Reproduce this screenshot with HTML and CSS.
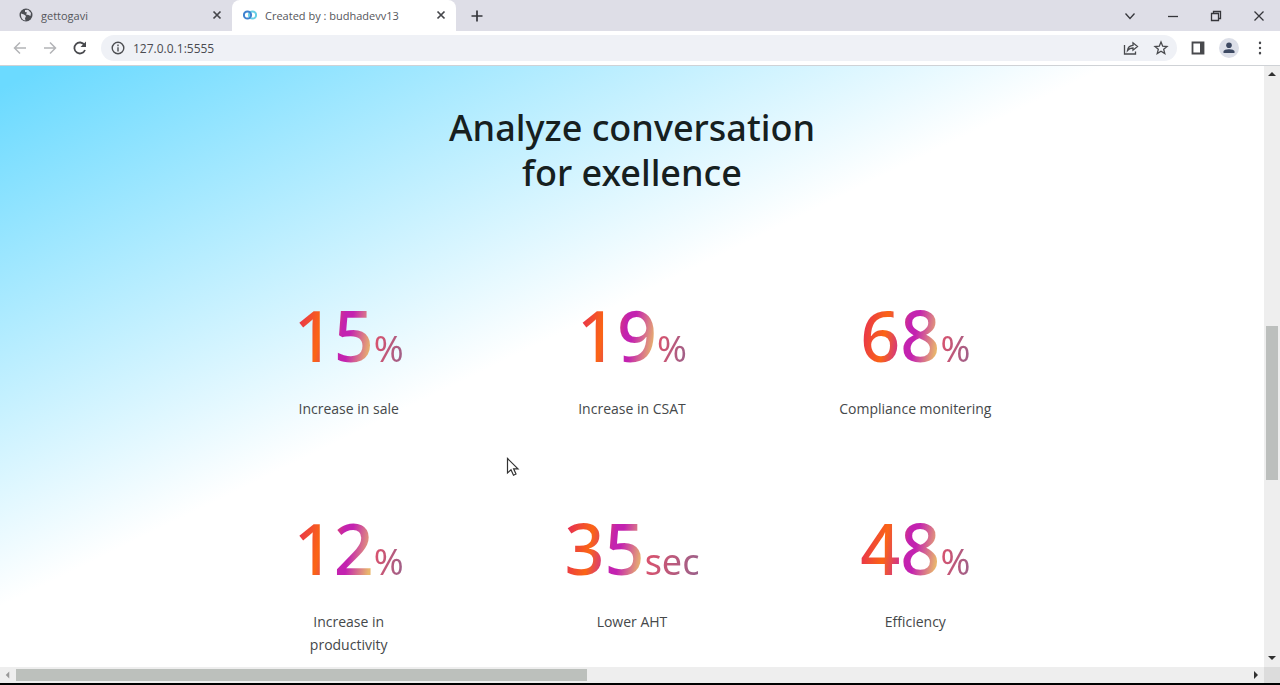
FILE: index.html
```html
<!DOCTYPE html>
<html lang="en">
<head>
<meta charset="utf-8">
<title>Created by : budhadevv13</title>
<link rel="stylesheet" href="styles.css">
</head>
<body>
<header class="browser">
  <div class="tabs">
    <div class="tab">
      <svg class="tab-icon" viewBox="0 0 14 14"><circle cx="7" cy="7" r="6.5" fill="#4b4d53"/><path d="M2 5.5 5 6.5 7 8 6 10.5 6.5 12.5C3.500 12.300 1.600 9.500 2 5.500ZM6 2 9 1.800 12 5 11.500 8 9.500 7 7 6.500 8 4.500 6 4Z" fill="#dedee7"/></svg>
      <span class="tab-title">gettogavi</span>
      <button class="tab-close" aria-label="Close tab"><svg viewBox="0 0 10 10"><path d="M1.500 1.500 8.500 8.500M8.500 1.500 1.500 8.500"/></svg></button>
    </div>
    <div class="tab active">
      <svg class="tab-icon" viewBox="0 0 14 14" fill="none" stroke-width="2"><circle cx="9.500" cy="7" r="3.600" stroke="#67cfe6"/><circle cx="4.500" cy="7" r="3.600" stroke="#3e82cf"/></svg>
      <span class="tab-title">Created by : budhadevv13</span>
      <button class="tab-close" aria-label="Close tab"><svg viewBox="0 0 10 10"><path d="M1.500 1.500 8.500 8.500M8.500 1.500 1.500 8.500"/></svg></button>
    </div>
    <button class="new-tab" aria-label="New tab"><svg viewBox="0 0 12 12"><path d="M6 .5V11.500M.5 6H11.500"/></svg></button>
    <div class="window-controls">
      <button aria-label="Search tabs"><svg viewBox="0 0 12 12"><path d="M1.500 3.500 6 8.500 10.500 3.500"/></svg></button>
      <button aria-label="Minimize"><svg viewBox="0 0 12 12"><path d="M1 6.500H11"/></svg></button>
      <button aria-label="Restore"><svg viewBox="0 0 12 12"><path d="M1.500 3.500H8.500V10.500H1.500ZM3.500 3.500V1.500H10.500V8.500H8.500"/></svg></button>
      <button aria-label="Close"><svg viewBox="0 0 12 12"><path d="M1.500 1.500 10.500 10.500M10.500 1.500 1.500 10.500"/></svg></button>
    </div>
  </div>
  <div class="toolbar">
    <button class="nav muted" aria-label="Back"><svg viewBox="0 0 16 16"><path d="M14 8H2.500M8 2.500 2.500 8 8 13.500"/></svg></button>
    <button class="nav muted" aria-label="Forward"><svg viewBox="0 0 16 16"><path d="M2 8H13.500M8 2.500 13.500 8 8 13.500"/></svg></button>
    <button class="nav" aria-label="Reload"><svg viewBox="0 0 16 16"><path d="M13 10A5.500 5.500 0 1 1 12.500 5"/><path d="M14 1.500V7H8.500Z" fill="#48494d" stroke="none"/></svg></button>
    <div class="address">
      <svg class="info" viewBox="0 0 14 14"><circle cx="7" cy="7" r="5.800"/><path d="M7 6.300V10.500M7 3.600V5.200"/></svg>
      <input class="url" type="text" aria-label="Address" value="127.0.0.1:5555">
      <button class="nav" aria-label="Share"><svg viewBox="0 0 16 16" class="thin"><path d="M1.500 5V14H12.500V11.500"/><path d="M4.500 10.500C5 7 7 5.500 10 5.300V2.800L14.500 6.500 10 10.200V8C7.500 8 6 8.600 4.500 10.500Z"/></svg></button>
      <button class="nav" aria-label="Bookmark"><svg viewBox="0 0 16 16" class="thin"><path d="M8 2 9.700 6.200 14 6.500 10.700 9.300 11.800 13.600 8 11.300 4.200 13.600 5.300 9.300 2 6.500 6.300 6.200Z"/></svg></button>
    </div>
    <button class="nav" aria-label="Side panel"><svg viewBox="0 0 16 16"><path d="M2.500 2.500H13.500V13.500H2.500Z"/><path d="M10 2H14V14H10Z" fill="#48494d" stroke="none"/></svg></button>
    <button class="profile" aria-label="Profile"><svg viewBox="0 0 20 20"><circle cx="10" cy="10" r="10" fill="#dcdfe8"/><circle cx="10" cy="7.300" r="2.800" fill="#3d4962"/><path d="M4.500 15V13.500C4.500 10.500 15.500 10.500 15.500 13.500V15Z" fill="#3d4962"/></svg></button>
    <button class="nav" aria-label="Menu"><svg viewBox="0 0 16 16"><path d="M8 2.800v.2M8 7.900v.2M8 13v.2" stroke-width="2.400" stroke-linecap="round"/></svg></button>
  </div>
</header>
<div class="viewport">
  <main class="page">
    <h1 class="heading">Analyze conversation<br>for exellence</h1>
    <section class="stats">
      <div class="stat"><p class="figure"><span class="number">15</span><span class="unit">%</span></p><p class="label">Increase in sale</p></div>
      <div class="stat"><p class="figure"><span class="number">19</span><span class="unit">%</span></p><p class="label">Increase in CSAT</p></div>
      <div class="stat"><p class="figure"><span class="number">68</span><span class="unit">%</span></p><p class="label">Compliance monitering</p></div>
      <div class="stat"><p class="figure"><span class="number">12</span><span class="unit">%</span></p><p class="label">Increase in<br>productivity</p></div>
      <div class="stat"><p class="figure"><span class="number">35</span><span class="unit">sec</span></p><p class="label">Lower AHT</p></div>
      <div class="stat"><p class="figure"><span class="number">48</span><span class="unit">%</span></p><p class="label">Efficiency</p></div>
    </section>
    <svg class="cursor" viewBox="0 0 14 20"><path d="M1.500 1.500V16L5 12.800 7.500 18.200 10 17 7.600 11.800H12Z"/></svg>
  </main>
  <div class="scroll-y">
    <svg viewBox="0 0 8 8"><path d="M0 6 4 2 8 6Z"/></svg>
    <div class="track-y"><div class="thumb-y"></div></div>
    <svg viewBox="0 0 8 8"><path d="M0 2 4 6 8 2Z"/></svg>
  </div>
  <div class="scroll-x">
    <svg class="faded" viewBox="0 0 8 8"><path d="M6 0 2 4 6 8Z"/></svg>
    <div class="track-x"><div class="thumb-x"></div></div>
    <svg viewBox="0 0 8 8"><path d="M2 0 6 4 2 8Z"/></svg>
  </div>
  <div class="corner"></div>
</div>
</body>
</html>
```
FILE: styles.css
```css
* { box-sizing: border-box; }
body {
  margin: 0;
  height: 100vh;
  display: flex;
  flex-direction: column;
  border-bottom: 2px solid #000;
  background: #fff;
  font-family: "Noto Sans", "Open Sans", sans-serif;
  overflow: hidden;
}
button { padding: 0; border: 0; background: none; display: grid; place-items: center; }
svg { display: block; }

.browser { flex: none; }
.tabs { display: flex; align-items: center; height: 31px; background: #dedee7; }
.tab {
  display: flex;
  align-items: center;
  gap: 8px;
  width: 232px;
  height: 31px;
  padding: 0 9px 1px 19px;
  font-family: "Open Sans", sans-serif;
  font-size: 11px;
  color: #55565b;
}
.tab.active { width: 224px; padding: 0 9px 1px 11px; background: #fff; border-radius: 8px 8px 0 0; }
.tab-icon { width: 14px; height: 14px; flex: none; }
.tab-title { flex: 1; white-space: nowrap; }
.tab-close { width: 12px; height: 12px; }
.tab-close svg { width: 10px; height: 10px; stroke: #45464b; stroke-width: 1.7; }
.new-tab { width: 42px; height: 30px; }
.new-tab svg { width: 12px; height: 12px; stroke: #35363b; stroke-width: 1.7; }
.window-controls { display: flex; margin-left: auto; height: 25px; }
.window-controls button { width: 43px; }
.window-controls svg { width: 12px; height: 12px; fill: none; stroke: #35363b; stroke-width: 1.3; }

.toolbar {
  display: flex;
  align-items: center;
  gap: 12px;
  height: 35px;
  padding: 0 11px;
  border-bottom: 1px solid #cfd2d6;
  background: #fff;
}
.nav { width: 18px; height: 18px; flex: none; }
.nav svg { width: 16px; height: 16px; fill: none; stroke: #48494d; stroke-width: 1.8; }
.nav svg.thin { stroke-width: 1.3; }
.nav.muted svg { stroke: #b3b4b7; stroke-width: 1.5; }
.address {
  flex: 1;
  display: flex;
  align-items: center;
  gap: 12px;
  height: 26px;
  padding: 0 7px 0 10px;
  border-radius: 13px;
  background: #eff1f6;
}
.info { width: 14px; height: 14px; fill: none; stroke: #4d4e52; stroke-width: 1.4; }
.url {
  flex: 1;
  min-width: 0;
  margin-left: -4px;
  padding: 0;
  border: 0;
  background: none;
  font: 12px "Open Sans", sans-serif;
  color: #4a4b50;
}
.profile { width: 20px; height: 20px; }
.profile svg { width: 20px; height: 20px; }

.viewport {
  flex: 1;
  min-height: 0;
  display: grid;
  grid-template-columns: minmax(0, 1fr) 16px;
  grid-template-rows: minmax(0, 1fr) 16px;
}
.page {
  position: relative;
  overflow: hidden;
  padding-top: 39px;
  background: linear-gradient(154deg, #6bdaff 20px, #fff 486px);
  text-align: center;
}
.heading { margin: 0; font-size: 36px; line-height: 45px; font-weight: 500; color: #16201f; }
.stats {
  display: grid;
  grid-template-columns: repeat(3, 1fr);
  row-gap: 33px;
  max-width: 850px;
  margin: 92px auto 0;
}
.stat { padding: 0 62px; min-height: 180px; }
.figure { margin: 0; font-size: 70px; line-height: 96px; white-space: nowrap; }
.number, .unit { background-clip: text; -webkit-background-clip: text; color: transparent; }
.number {
  font-weight: 500;
  background-image: linear-gradient(100deg, #e3265c 4%, #fb6514 34%, #c322b0 58%, #c322b0 66%, #e9b66c 90%);
}
.unit { font-size: 36px; line-height: 48px; background-image: linear-gradient(100deg, #e0506a, #98628c); }
.label { margin: 14px 0 0; font-family: "Open Sans", sans-serif; font-size: 14px; line-height: 23px; color: #45484a; }
.cursor {
  position: absolute;
  left: 506px;
  top: 391px;
  width: 14px;
  height: 20px;
  fill: #fff;
  stroke: #333;
  stroke-width: 1.2;
}

.scroll-y, .scroll-x { display: flex; align-items: center; background: #eee; }
.scroll-y { flex-direction: column; padding: 4px 0 5px; }
.scroll-x { padding: 0 4px; }
.scroll-y svg, .scroll-x svg { width: 8px; height: 8px; flex: none; fill: #303030; }
.scroll-x svg.faded { fill: #999; width: 7px; }
.track-y { flex: 1; width: 12px; padding: 248px 0 0; }
.thumb-y { width: 12px; height: 154px; background: #bcbfbd; }
.track-x { flex: 1; height: 12px; padding: 0 5px; }
.thumb-x { width: 46.4%; height: 12px; background: #bcc0bc; }
.corner { background: #dcdcdc; }
```
